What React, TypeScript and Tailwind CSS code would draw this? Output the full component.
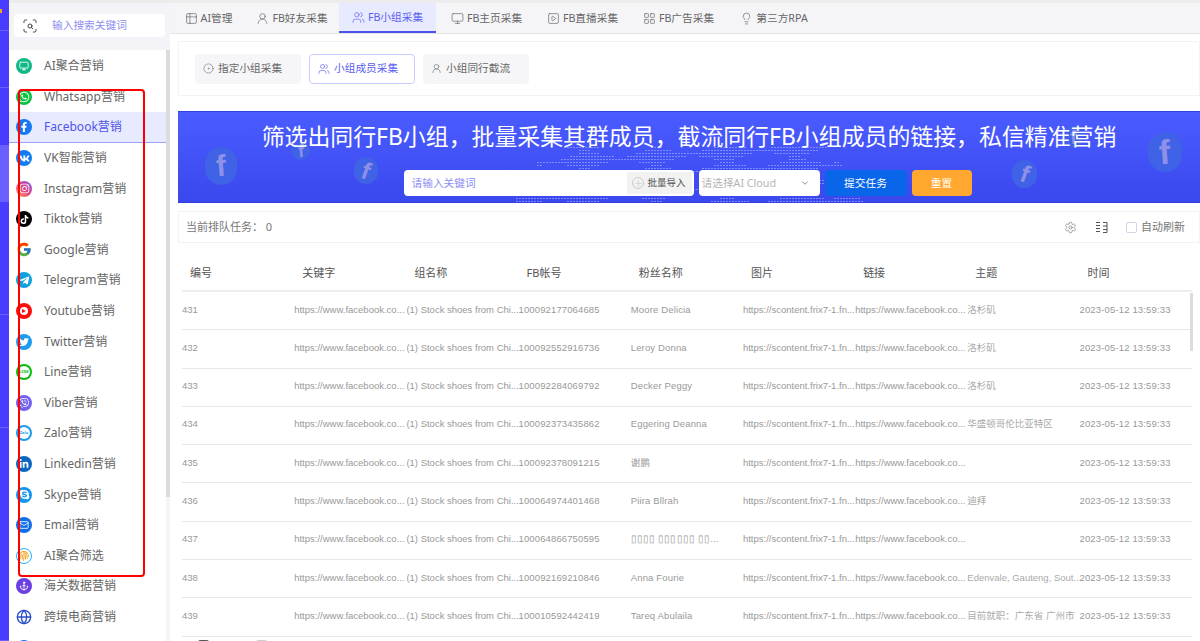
import type { ReactNode } from "react";
import { ScanSearch, Settings, ChevronDown, Plus, Users, UserRound, Monitor, SquarePlay, LayoutGrid, Table2, CircleDot, Mail, Anchor, Globe, Lightbulb } from "lucide-react";
import { FaWhatsapp, FaFacebookF, FaVk, FaInstagram, FaTiktok, FaTelegramPlane, FaTwitter, FaViber, FaLinkedinIn, FaSkype, FaFingerprint } from "react-icons/fa";
import { FcGoogle } from "react-icons/fc";

const cjk = "font-['Noto_Sans','Noto_Sans_CJK_SC',sans-serif]";
const cell = "font-['Liberation_Sans','Noto_Sans_CJK_SC',sans-serif]";

function Brand({ bg, children }: { bg: string; children: ReactNode }) {
  return <span className={`w-4 h-4 rounded-full flex items-center justify-center text-white shrink-0 ${bg}`}>{children}</span>;
}

const menu: { label: string; icon: ReactNode; active?: boolean }[] = [
  { label: "AI聚合营销", icon: <Brand bg="bg-[#12b886]"><Monitor size={10} /></Brand> },
  { label: "Whatsapp营销", icon: <Brand bg="bg-[#0cc243]"><FaWhatsapp size={12} /></Brand> },
  { label: "Facebook营销", active: true, icon: <Brand bg="bg-[#1877f2]"><FaFacebookF size={10} /></Brand> },
  { label: "VK智能营销", icon: <Brand bg="bg-[#0f7cf5]"><FaVk size={11} /></Brand> },
  { label: "Instagram营销", icon: <Brand bg="bg-gradient-to-tr from-[#f9a03c] via-[#e5397f] to-[#7a3ff2]"><FaInstagram size={11} /></Brand> },
  { label: "Tiktok营销", icon: <Brand bg="bg-black"><FaTiktok size={9} /></Brand> },
  { label: "Google营销", icon: <span className="w-4 h-4 flex items-center justify-center shrink-0"><FcGoogle size={17} /></span> },
  { label: "Telegram营销", icon: <Brand bg="bg-[#10a0e0]"><FaTelegramPlane size={11} /></Brand> },
  { label: "Youtube营销", icon: <Brand bg="bg-[#fa0f0f]"><span className="w-2 h-2 bg-white rounded-sm flex items-center justify-center"><span className="border-l-[4px] border-y-[2.5px] border-l-[#fa0f0f] border-y-transparent" /></span></Brand> },
  { label: "Twitter营销", icon: <Brand bg="bg-[#1d9bf0]"><FaTwitter size={10} /></Brand> },
  { label: "Line营销", icon: <Brand bg="bg-[#07bc0c]"><span className="w-3 h-3 bg-white rounded-full text-[4px] font-bold text-[#07bc0c] flex items-center justify-center leading-none">LINE</span></Brand> },
  { label: "Viber营销", icon: <Brand bg="bg-[#7360f2]"><FaViber size={10} /></Brand> },
  { label: "Zalo营销", icon: <Brand bg="bg-[#1a9cf0]"><span className="w-3 h-3 bg-white rounded-full text-[4px] font-bold text-[#1a9cf0] flex items-center justify-center leading-none">Zalo</span></Brand> },
  { label: "Linkedin营销", icon: <Brand bg="bg-[#0a66c2]"><FaLinkedinIn size={10} /></Brand> },
  { label: "Skype营销", icon: <Brand bg="bg-[#1296ee]"><FaSkype size={11} /></Brand> },
  { label: "Email营销", icon: <Brand bg="bg-[#0f6fe8]"><Mail size={10} /></Brand> },
  { label: "AI聚合筛选", icon: <span className="w-4 h-4 flex items-center justify-center text-[#f0a21c] rounded-full border border-[#1db4f5] shrink-0"><FaFingerprint size={10} /></span> },
  { label: "海关数据营销", icon: <Brand bg="bg-[#6a3fe0]"><Anchor size={10} /></Brand> },
  { label: "跨境电商营销", icon: <span className="w-4 h-4 flex items-center justify-center text-[#2a4fc8] shrink-0"><Globe size={16} /></span> },
  { label: "", icon: <Brand bg="bg-[#0f7cf5]"><Globe size={10} /></Brand> },
];

const tabs: { label: string; icon: ReactNode; width: string; active?: boolean }[] = [
  { label: "AI管理", icon: <Table2 size={13} strokeWidth={1.25} />, width: "w-[73px]" },
  { label: "FB好友采集", icon: <UserRound size={13} strokeWidth={1.25} />, width: "w-[94px]" },
  { label: "FB小组采集", icon: <Users size={13} strokeWidth={1.25} />, width: "w-[97px]", active: true },
  { label: "FB主页采集", icon: <Monitor size={13} strokeWidth={1.25} />, width: "w-[101px]" },
  { label: "FB直播采集", icon: <SquarePlay size={13} strokeWidth={1.25} />, width: "w-[91px]" },
  { label: "FB广告采集", icon: <LayoutGrid size={13} strokeWidth={1.25} />, width: "w-[101px]" },
  { label: "第三方RPA", icon: <Lightbulb size={13} strokeWidth={1.25} />, width: "w-[90px]" },
];

const fbUrl = "https://www.facebook.co...";
const groupName = "(1) Stock shoes from Chi...";
const picUrl = "https://scontent.frix7-1.fn...";

const rows = [
  ["431", "100092177064685", "Moore Delicia", "洛杉矶"],
  ["432", "100092552916736", "Leroy Donna", "洛杉矶"],
  ["433", "100092284069792", "Decker Peggy", "洛杉矶"],
  ["434", "100092373435862", "Eggering Deanna", "华盛顿哥伦比亚特区"],
  ["435", "100092378091215", "谢鹏", ""],
  ["436", "100064974401468", "Piira Bllrah", "迪拜"],
  ["437", "100064866750595", "▯▯▯▯ ▯▯▯▯▯▯ ▯▯...", ""],
  ["438", "100092169210846", "Anna Fourie", "Edenvale, Gauteng, Sout..."],
  ["439", "100010592442419", "Tareq Abulaila", "目前就职：广东省 广州市"],
];

const headers = ["编号", "关键字", "组名称", "FB帐号", "粉丝名称", "图片", "链接", "主题", "时间"];

// dots of the globe behind the search form
const dots: { x: number; y: number }[] = [];
for (let y = 0; y < 56; y += 3) {
  for (let x = 0; x < 380; x += 3) {
    const dx = x - 190;
    const dy = y - 130;
    const d2 = dx * dx + dy * dy;
    const inside = d2 < 190 * 190 && d2 > 60 * 60;
    const land = Math.sin(x * 0.09) + Math.cos(y * 0.35 + x * 0.02) > -0.1;
    if (inside && land) dots.push({ x, y });
  }
}

function Bubble({ className, tilt }: { className: string; tilt?: boolean }) {
  return (
    <div className={`absolute rounded-full bg-[#3f62e6] flex items-center justify-center overflow-hidden ${className}`}>
      <span className={`font-['Liberation_Sans',sans-serif] font-bold text-[#8f90e8] leading-none ${tilt ? "rotate-[20deg]" : "rotate-[-4deg]"}`}>f</span>
    </div>
  );
}

function SubTab({ label, icon, active }: { label: string; icon: ReactNode; active?: boolean }) {
  return (
    <div className={`w-[106px] h-[30px] rounded flex items-center justify-start pl-[8px] gap-[4px] text-[10.7px] ${active ? "bg-white border border-[#c9ccff] text-[#5a5ff0]" : "bg-[#f6f6f8] text-[#666]"}`}>
      {icon}
      <span>{label}</span>
    </div>
  );
}

export default function App() {
  return (
    <div className={`relative w-[1200px] h-[641px] overflow-hidden bg-white flex ${cjk}`}>
      {/* colored rail */}
      <div className="w-[9px] h-full shrink-0 flex flex-col bg-[#4a3cff]">
        <div className="h-[31px] shrink-0 border-b border-[#6a60ff] relative"><span className="absolute top-[9px] left-0 w-[2px] h-[4px] bg-[#f5a623]" /></div>
        <div className="h-[57px] shrink-0 border-b border-[#6a60ff]" />
        <div className="h-[57px] shrink-0" />
        <div className="h-[57px] shrink-0 bg-[#6a60ff]" />
        <div className="h-[113px] shrink-0 border-b border-[#6a60ff]" />
        <div className="h-[113px] shrink-0 border-b border-[#6a60ff]" />
        <div className="flex-1 border-b border-[#6a60ff]" />
      </div>

      {/* sidebar */}
      <aside className="w-[161px] h-full shrink-0 flex flex-col overflow-hidden">
        <div className="h-[3px] shrink-0 bg-[#ececec]" />
        <div className="h-[47px] shrink-0 bg-[#f4f4f8] pt-[11px] px-[5px]">
          <div className="h-[23px] w-[151px] bg-white rounded flex items-center pl-[8px] gap-[14px]">
            <ScanSearch size={16} className="text-[#444]" strokeWidth={1.5} />
            <span className="text-[10.7px] text-[#8d8ff2]">输入搜索关键词</span>
          </div>
        </div>
        <div className="flex-1 flex min-h-0">
          <div className="w-[157px] shrink-0 flex flex-col pt-[1px]">
            {menu.map((m) => (
              <div key={m.label || "more"} className={`h-[30.6px] shrink-0 flex items-center pl-[7px] gap-[12px] text-[12px] ${m.active ? "bg-[#e8eaff] border-b border-[#9aa2f5] text-[#4f55e8]" : "text-[#666]"}`}>
                {m.icon}
                <span>{m.label}</span>
              </div>
            ))}
          </div>
          <div className="w-[4px] shrink-0 bg-[#f5f5f5]">
            <div className="h-[447px] bg-[#dcdcdc]" />
          </div>
        </div>
      </aside>

      {/* main */}
      <main className="w-[1030px] h-full shrink-0 flex flex-col overflow-hidden">
        <div className="h-[3px] shrink-0 bg-[#ececec]" />
        <div className="h-[31px] bg-[#f5f5f8] border-b border-[#e4e4e4] flex pl-[2px] shrink-0">
          {tabs.map((t) => (
            <div key={t.label} className={`${t.width} h-[30px] flex items-center justify-center gap-[3px] text-[10.7px] ${t.active ? "bg-[#e8eaff] border-b-2 border-[#4a54e8] text-[#5a5ff0]" : "text-[#666]"}`}>
              {t.icon}
              <span>{t.label}</span>
            </div>
          ))}
        </div>

        <div className="ml-[8px] mt-[7px] h-[55px] w-[1022px] border border-[#f3f3f3] flex items-center gap-[8px] pl-[16px] shrink-0">
          <SubTab label="指定小组采集" icon={<CircleDot size={11} strokeWidth={1.25} />} />
          <SubTab label="小组成员采集" icon={<Users size={12} strokeWidth={1.25} />} active />
          <SubTab label="小组同行截流" icon={<UserRound size={11} strokeWidth={1.25} />} />
        </div>

        <div className="relative ml-[8px] mt-[15px] h-[92px] w-[1022px] overflow-hidden bg-gradient-to-b from-[#4a5cff] to-[#3a48ee] border-y border-[#2f3fe0] shrink-0">
          <svg className="absolute left-[320px] top-[35px]" width="380" height="56">
            {dots.map((d) => (
              <rect key={`${d.x}-${d.y}`} x={d.x} y={d.y} width="2" height="1" fill="#a5b2ff" opacity="0.6" />
            ))}
          </svg>
          <Bubble className="left-[27px] top-[35px] w-[32px] h-[38px] text-[30px]" />
          <Bubble className="left-[113px] top-[30px] w-[19px] h-[18px] text-[18px]" />
          <Bubble className="left-[176px] top-[45px] w-[24px] h-[27px] text-[24px]" tilt />
          <Bubble className="left-[970px] top-[20px] w-[34px] h-[40px] text-[34px]" />
          <Bubble className="left-[834px] top-[48px] w-[25px] h-[28px] text-[24px]" tilt />
          <Bubble className="left-[885px] top-[13px] w-[20px] h-[23px] text-[20px]" />

          <div className="relative flex flex-col items-center">
            <h1 className="h-[50px] text-[22.9px] leading-[50px] text-white font-normal whitespace-nowrap">筛选出同行FB小组，批量采集其群成员，截流同行FB小组成员的链接，私信精准营销</h1>
            <div className="flex w-[569px] h-[26px] mt-[8px] gap-[5px] text-[10.7px] -translate-x-[1px]">
              <div className="w-[290px] bg-white rounded flex items-center justify-between pl-[8px] pr-[2px]">
                <span className="text-[#8d8ff2]">请输入关键词</span>
                <span className="w-[65px] h-[22px] bg-[#f2f2f2] flex items-center justify-center gap-[3px] text-[9.5px] text-[#555]"><span className="w-3 h-3 rounded-full border border-[#ccc] flex items-center justify-center text-[#ccc]"><Plus size={9} /></span>批量导入</span>
              </div>
              <div className="w-[121px] bg-white rounded flex items-center justify-between pl-[3px] pr-[10px] text-[#b5b5b5]">
                <span>请选择AI Cloud</span>
                <ChevronDown size={10} className="text-[#777]" />
              </div>
              <div className="w-[82px] bg-[#0a66e8] rounded flex items-center justify-center text-white">提交任务</div>
              <div className="w-[60px] bg-[#ffa72f] rounded flex items-center justify-center text-white">重置</div>
            </div>
          </div>
        </div>

        <div className="ml-[8px] mt-[8px] h-[32px] w-[1022px] border border-[#f3f3f3] flex items-center justify-between pl-[7px] pr-[14px] text-[11px] text-[#777] shrink-0">
          <span>当前排队任务： 0</span>
          <div className="flex items-center">
            <Settings size={13} strokeWidth={1.25} className="text-[#777]" />
            <svg width="13" height="13" viewBox="0 0 13 13" className="ml-[18px] text-[#555]" fill="none" stroke="currentColor" strokeWidth="1">
              <path d="M1 1.5h4M1 4.5h4M1 7.5h4M1 10.5h4M8 1.5h4v10H8M8 5h4M8 8.5h4" />
            </svg>
            <span className="w-[11px] h-[11px] shrink-0 border border-[#d5d5e5] rounded-[2px] ml-[18px] mr-[4px]" />
            <span>自动刷新</span>
          </div>
        </div>

        <div className="ml-[12px] mt-[7px] w-[1010px] relative shrink-0">
          <div className="grid grid-cols-[repeat(9,112.2px)] h-[42px] pt-[6px] border-b-2 border-[#eeeeee] items-center text-[11px] text-[#555]">
            {headers.map((h) => (
              <span key={h} className="pl-[8px]">{h}</span>
            ))}
          </div>
          {rows.map((r) => (
            <div key={r[0]} className={`grid grid-cols-[repeat(9,112.2px)] h-[38.3px] pb-[2px] border-b border-[#e8e8e8] items-center text-[9.5px] text-[#999] ${cell}`}>
              <span>{r[0]}</span>
              <span className="whitespace-nowrap">{fbUrl}</span>
              <span className="whitespace-nowrap">{groupName}</span>
              <span className="whitespace-nowrap tracking-[0.12px]">{r[1]}</span>
              <span className="whitespace-nowrap tracking-[0.15px]">{r[2]}</span>
              <span className="whitespace-nowrap">{picUrl}</span>
              <span className="whitespace-nowrap">{fbUrl}</span>
              <span className="whitespace-nowrap text-[#aaa]">{r[3]}</span>
              <span className="whitespace-nowrap tracking-[0.15px]">2023-05-12 13:59:33</span>
            </div>
          ))}
          <div className="flex pl-[15px] gap-[45px] pt-[3px]">
            <span className="w-[13px] h-[13px] bg-[#555] rounded-sm" />
            <span className="w-[13px] h-[13px] bg-[#ccc] rounded-sm" />
          </div>
          <div className="absolute right-[-1px] top-[43px] w-[3px] h-[58px] bg-[#dcdcdc]" />
        </div>
      </main>

      {/* red annotation box */}
      <div className="absolute left-[18px] top-[89px] w-[127px] h-[488px] border-2 border-[#f00] rounded-sm pointer-events-none" />
    </div>
  );
}
